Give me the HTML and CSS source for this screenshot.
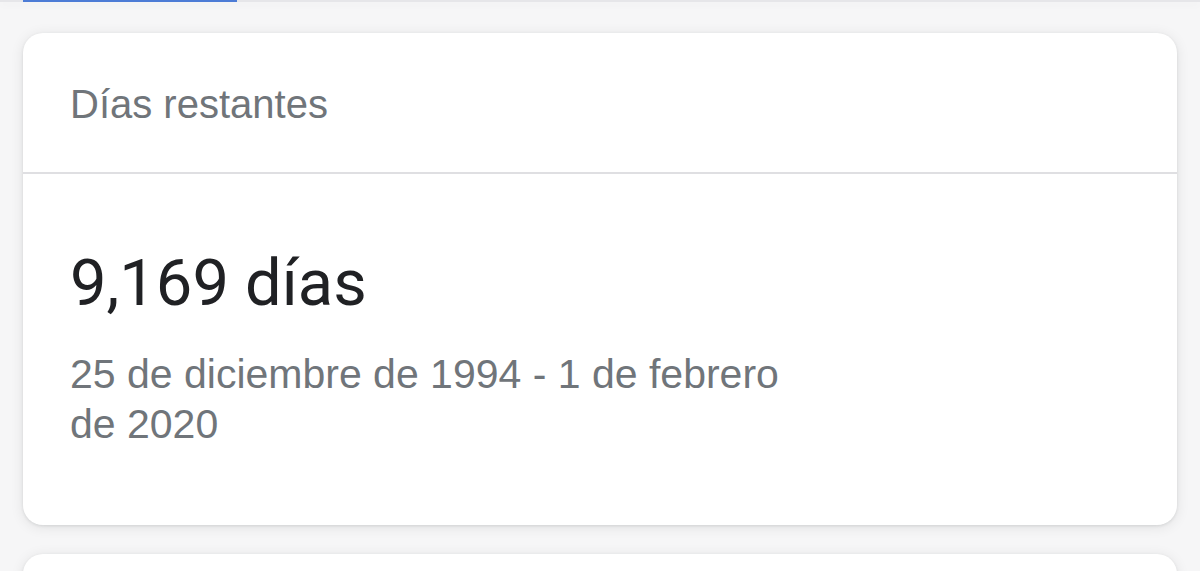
FILE: index.html
```html
<!DOCTYPE html>
<html lang="es">
<head>
<meta charset="utf-8">
<title>Días restantes</title>
<link rel="stylesheet" href="styles.css">
</head>
<body>
<div class="page">
  <div class="tabs">
    <div class="tab-active"></div>
  </div>
  <section class="card">
    <div class="card-header">Días restantes</div>
    <div class="card-body">
      <div class="result">9,169 días</div>
      <div class="range">25 de diciembre de 1994 - 1 de febrero de 2020</div>
    </div>
  </section>
  <section class="card next"></section>
</div>
</body>
</html>
```

FILE: styles.css
```css
html, body {
  margin: 0;
  padding: 0;
  height: 100%;
  overflow: hidden;
}
body {
  background: #f6f6f7;
}
.page {
  display: flex;
  flex-direction: column;
  padding: 0 23px;
}
.tabs {
  height: 2px;
  margin: 0 -23px;
  padding: 0 23px;
  background: #e6e6e9;
  box-shadow: 0 2px 8px rgba(0, 0, 0, 0.06);
}
.tab-active {
  width: 214px;
  height: 2px;
  background: #4d7cd6;
}
.card {
  margin-top: 31px;
  background: #ffffff;
  border-radius: 20px;
  box-shadow: 0 1px 3px rgba(60, 64, 67, 0.12), 0 2px 14px rgba(0, 0, 0, 0.09);
}
.card-header {
  padding: 48px 47px 45px;
  font-family: "Liberation Sans", Arial, sans-serif;
  font-size: 40px;
  line-height: 46px;
  color: #70757a;
  border-bottom: 2px solid #dfdfe2;
}
.card-body {
  padding: 71px 47px 76px;
}
.result {
  font-family: Roboto, "Liberation Sans", sans-serif;
  font-size: 65px;
  line-height: 76px;
  color: #202124;
}
.range {
  margin-top: 28px;
  max-width: 730px;
  font-family: "Liberation Sans", Arial, sans-serif;
  font-size: 41px;
  line-height: 50px;
  color: #70757a;
}
.card.next {
  margin-top: 29px;
  height: 60px;
}
```
